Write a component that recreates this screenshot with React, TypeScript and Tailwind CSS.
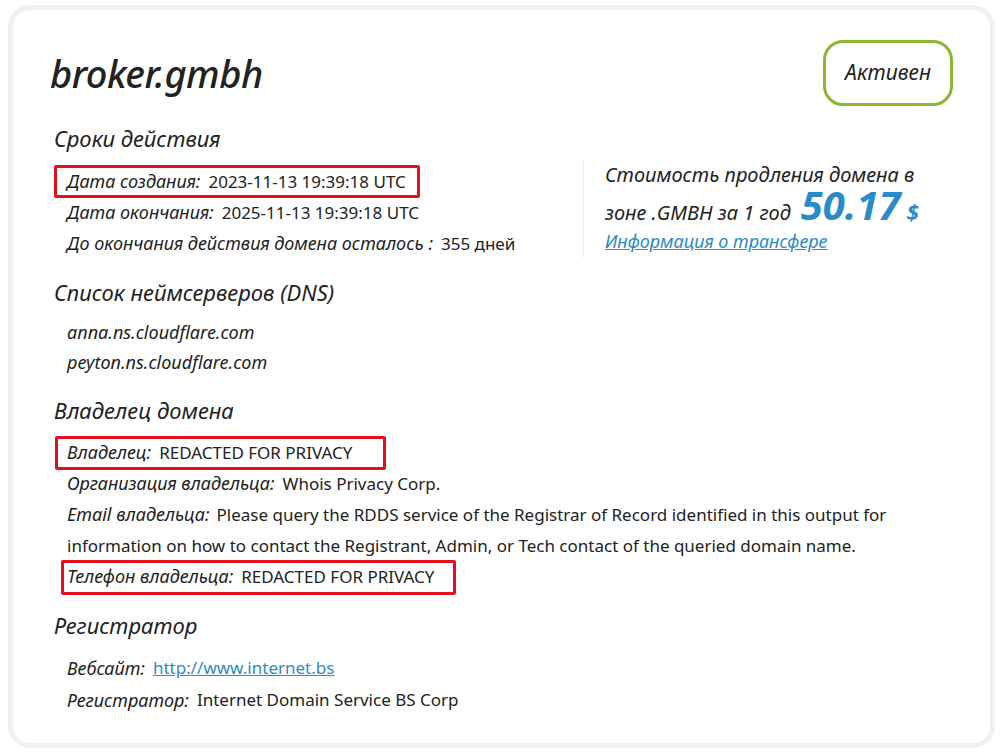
import React from 'react';

const label = "italic text-[18px] text-[#222]";
const sans = { fontFamily: '"Noto Sans", "DejaVu Sans", sans-serif' };

type Row = { label: string; value: React.ReactNode; box?: string };

// red annotation frame drawn over a row
const Mark = ({ box }: { box?: string }) =>
  box ? <span className={`pointer-events-none absolute border-[3px] border-[#e3101b] rounded-[2px] ${box}`} /> : null;

const InfoRow = ({ row }: { row: Row }) => (
  <div className="relative flex h-[31px] w-fit items-center pl-[13px] text-[17px] text-[#222]">
    <Mark box={row.box} />
    <span className={label}>{row.label}:</span>
    <span className="ml-[8px]">{row.value}</span>
  </div>
);

const Heading = ({ children }: { children: React.ReactNode }) => (
  <h2 className="mt-[18px] h-[30px] text-[22px] leading-[30px] italic text-[#222]">{children}</h2>
);

const App = () => {
  return (
    <div className="min-h-screen bg-white px-[8px] pt-[5px]" style={sans}>
      <div className="rounded-[22px] border-[5px] border-[#f1f1f1] bg-white px-[37px] pt-[30px] pb-[27px]">
        {/* Header */}
        <div className="flex items-center justify-between">
          <h1 className="text-[38px] leading-[44px] italic font-medium text-[#222] tracking-[-0.5px]">broker.gmbh</h1>
          <div className="flex h-[66px] w-[130px] items-center justify-center rounded-[20px] border-[3px] border-[#8db635] text-[21px] italic text-[#222]">
            Активен
          </div>
        </div>

        <div className="pl-[4px]">
          <h2 className="mt-[17px] h-[30px] text-[22px] leading-[30px] italic text-[#222]">Сроки действия</h2>
          <div className="flex">
            <div className="mt-[13px] w-[529px]">
              {[
                { label: 'Дата создания', value: '2023-11-13 19:39:18 UTC', box: 'left-0 -right-[14px] -top-[1px] -bottom-[1px]' },
                { label: 'Дата окончания', value: '2025-11-13 19:39:18 UTC' },
                { label: 'До окончания действия домена осталось ', value: '355 дней' },
              ].map((r, i) => (
                <InfoRow key={i} row={r} />
              ))}
            </div>
            <div className="mt-[7px] h-[98px] border-l border-[#eeeeee] pl-[21px] text-[20px] italic text-[#222]">
              <div className="h-[30px] leading-[30px]">Стоимость продления домена в</div>
              <div className="flex h-[36px] items-baseline">
                <span>зоне .GMBH за 1 год</span>
                <span className="ml-[10px] text-[40px] leading-[30px] font-bold text-[#2a8bca]">50.17</span>
                <span className="ml-[6px] text-[22px] font-bold text-[#2a8bca]">$</span>
              </div>
              <a href="#" className="block text-[18px] leading-[30px] text-[#2d8ac7] underline">Информация о трансфере</a>
            </div>
          </div>

          <Heading>Список неймсерверов (DNS)</Heading>
          <div className="mt-[10px] pl-[13px] text-[18px] italic text-[#222]">
            <div className="h-[30px] leading-[30px]">anna.ns.cloudflare.com</div>
            <div className="h-[30px] leading-[30px]">peyton.ns.cloudflare.com</div>
          </div>

          <Heading>Владелец домена</Heading>
          <div className="mt-[12px]">
            <InfoRow row={{ label: 'Владелец', value: 'REDACTED FOR PRIVACY', box: 'left-[1px] right-[-34px] top-[-1px] bottom-[-2px]' }} />
            <InfoRow row={{ label: 'Организация владельца', value: 'Whois Privacy Corp.' }} />
            <div className="pl-[13px] text-[17px] leading-[31px] text-[#222]">
              <span className={label}>Email владельца:</span>
              <span className="ml-[7px]">Please query the RDDS service of the Registrar of Record identified in this output for</span>
              <br />
              information on how to contact the Registrant, Admin, or Tech contact of the queried domain name.
            </div>
            <InfoRow row={{ label: 'Телефон владельца', value: 'REDACTED FOR PRIVACY', box: 'left-[7px] right-[-22px] top-[-1px] bottom-[-3px]' }} />
          </div>

          <Heading>Регистратор</Heading>
          <div className="mt-[12px]">
            <div className="flex h-[32px] items-center pl-[13px] text-[17px] text-[#222]">
              <span className={label}>Вебсайт:</span>
              <a href="#" className="ml-[8px] text-[#2d8ac7] underline">http://www.internet.bs</a>
            </div>
            <div className="flex h-[32px] items-center pl-[13px] text-[17px] text-[#222]">
              <span className={label}>Регистратор:</span>
              <span className="ml-[8px]">Internet Domain Service BS Corp</span>
            </div>
          </div>
        </div>
      </div>
    </div>
  );
};

export default App;
